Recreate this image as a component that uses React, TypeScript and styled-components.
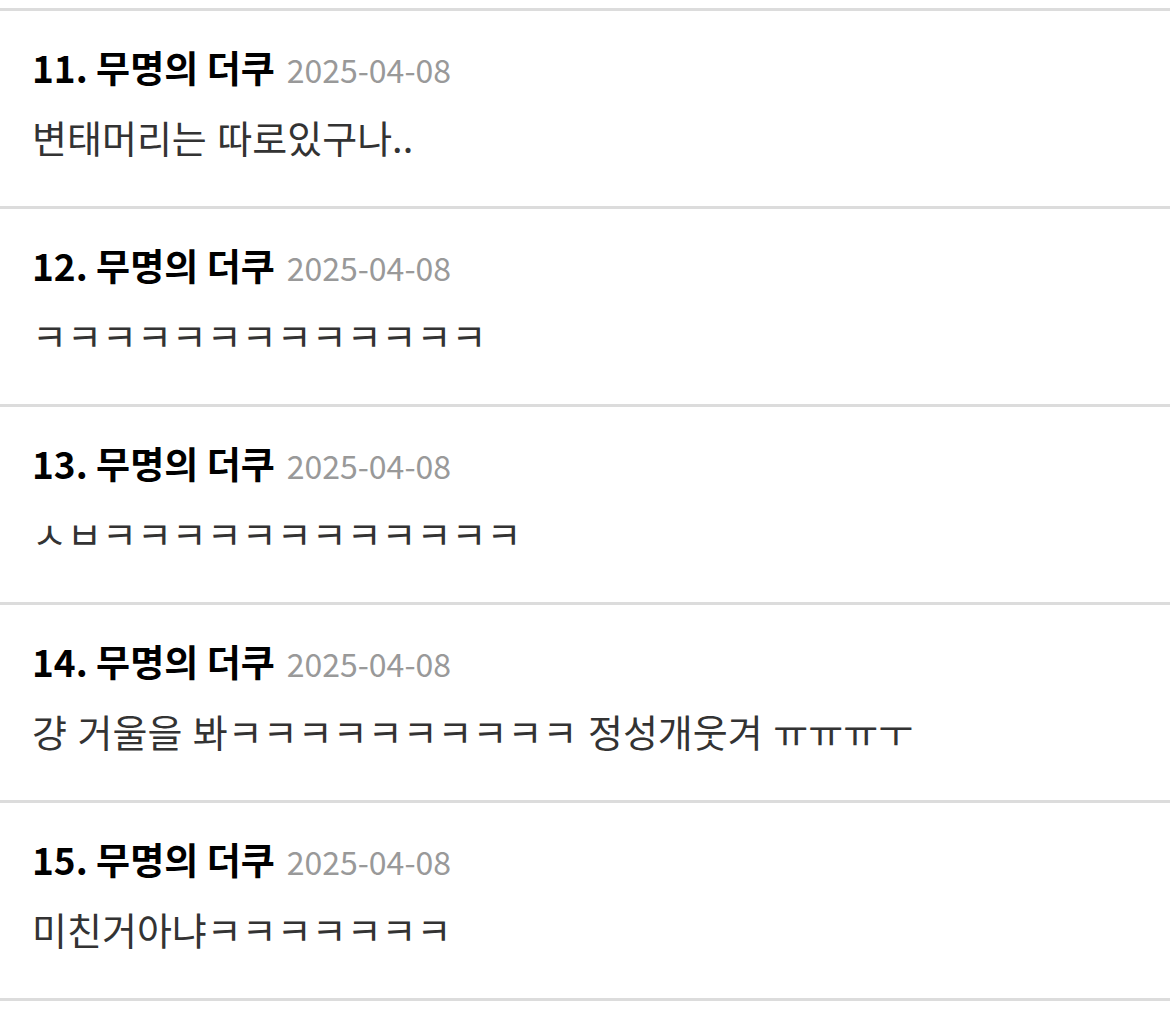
import styled, { createGlobalStyle } from 'styled-components';

const GlobalStyle = createGlobalStyle`
  html, body {
    margin: 0;
    padding: 0;
    background: #fff;
  }
  body {
    font-family: "Noto Sans CJK KR", "Noto Sans", sans-serif;
  }
`;

type Comment = {
  no: number;
  author: string;
  date: string;
  body: string;
};

const comments: Comment[] = [
  { no: 11, author: '무명의 더쿠', date: '2025-04-08', body: '변태머리는 따로있구나..' },
  { no: 12, author: '무명의 더쿠', date: '2025-04-08', body: 'ㅋㅋㅋㅋㅋㅋㅋㅋㅋㅋㅋㅋㅋ' },
  { no: 13, author: '무명의 더쿠', date: '2025-04-08', body: 'ㅅㅂㅋㅋㅋㅋㅋㅋㅋㅋㅋㅋㅋㅋ' },
  { no: 14, author: '무명의 더쿠', date: '2025-04-08', body: '걍 거울을 봐ㅋㅋㅋㅋㅋㅋㅋㅋㅋㅋ 정성개웃겨 ㅠㅠㅠㅜ' },
  { no: 15, author: '무명의 더쿠', date: '2025-04-08', body: '미친거아냐ㅋㅋㅋㅋㅋㅋㅋ' },
];

const List = styled.ul`
  list-style: none;
  margin: 0;
  padding: 8px 0 0;
`;

const Item = styled.li`
  box-sizing: border-box;
  height: 198px;
  border-top: 3px solid #dcdcdc;
  padding: 34px 32px 0;
  &:last-child {
    height: 201px;
    border-bottom: 3px solid #dcdcdc;
  }
`;

const Header = styled.div`
  display: flex;
  align-items: baseline;
  gap: 12px;
  line-height: 1.2;
`;

const Author = styled.span`
  font-size: 37px;
  font-weight: 700;
  color: #000;
`;

const DateText = styled.span`
  font-size: 32px;
  color: #999;
`;

const Body = styled.p`
  margin: 23px 0 0;
  font-size: 38px;
  line-height: 1.3;
  color: #333;
  white-space: nowrap;
  word-spacing: 2px;
`;

export default function App() {
  return (
    <>
      <GlobalStyle />
      <List>
        {comments.map((c) => (
          <Item key={c.no}>
            <Header>
              <Author>{c.no}. {c.author}</Author>
              <DateText>{c.date}</DateText>
            </Header>
            <Body>{c.body}</Body>
          </Item>
        ))}
      </List>
    </>
  );
}
